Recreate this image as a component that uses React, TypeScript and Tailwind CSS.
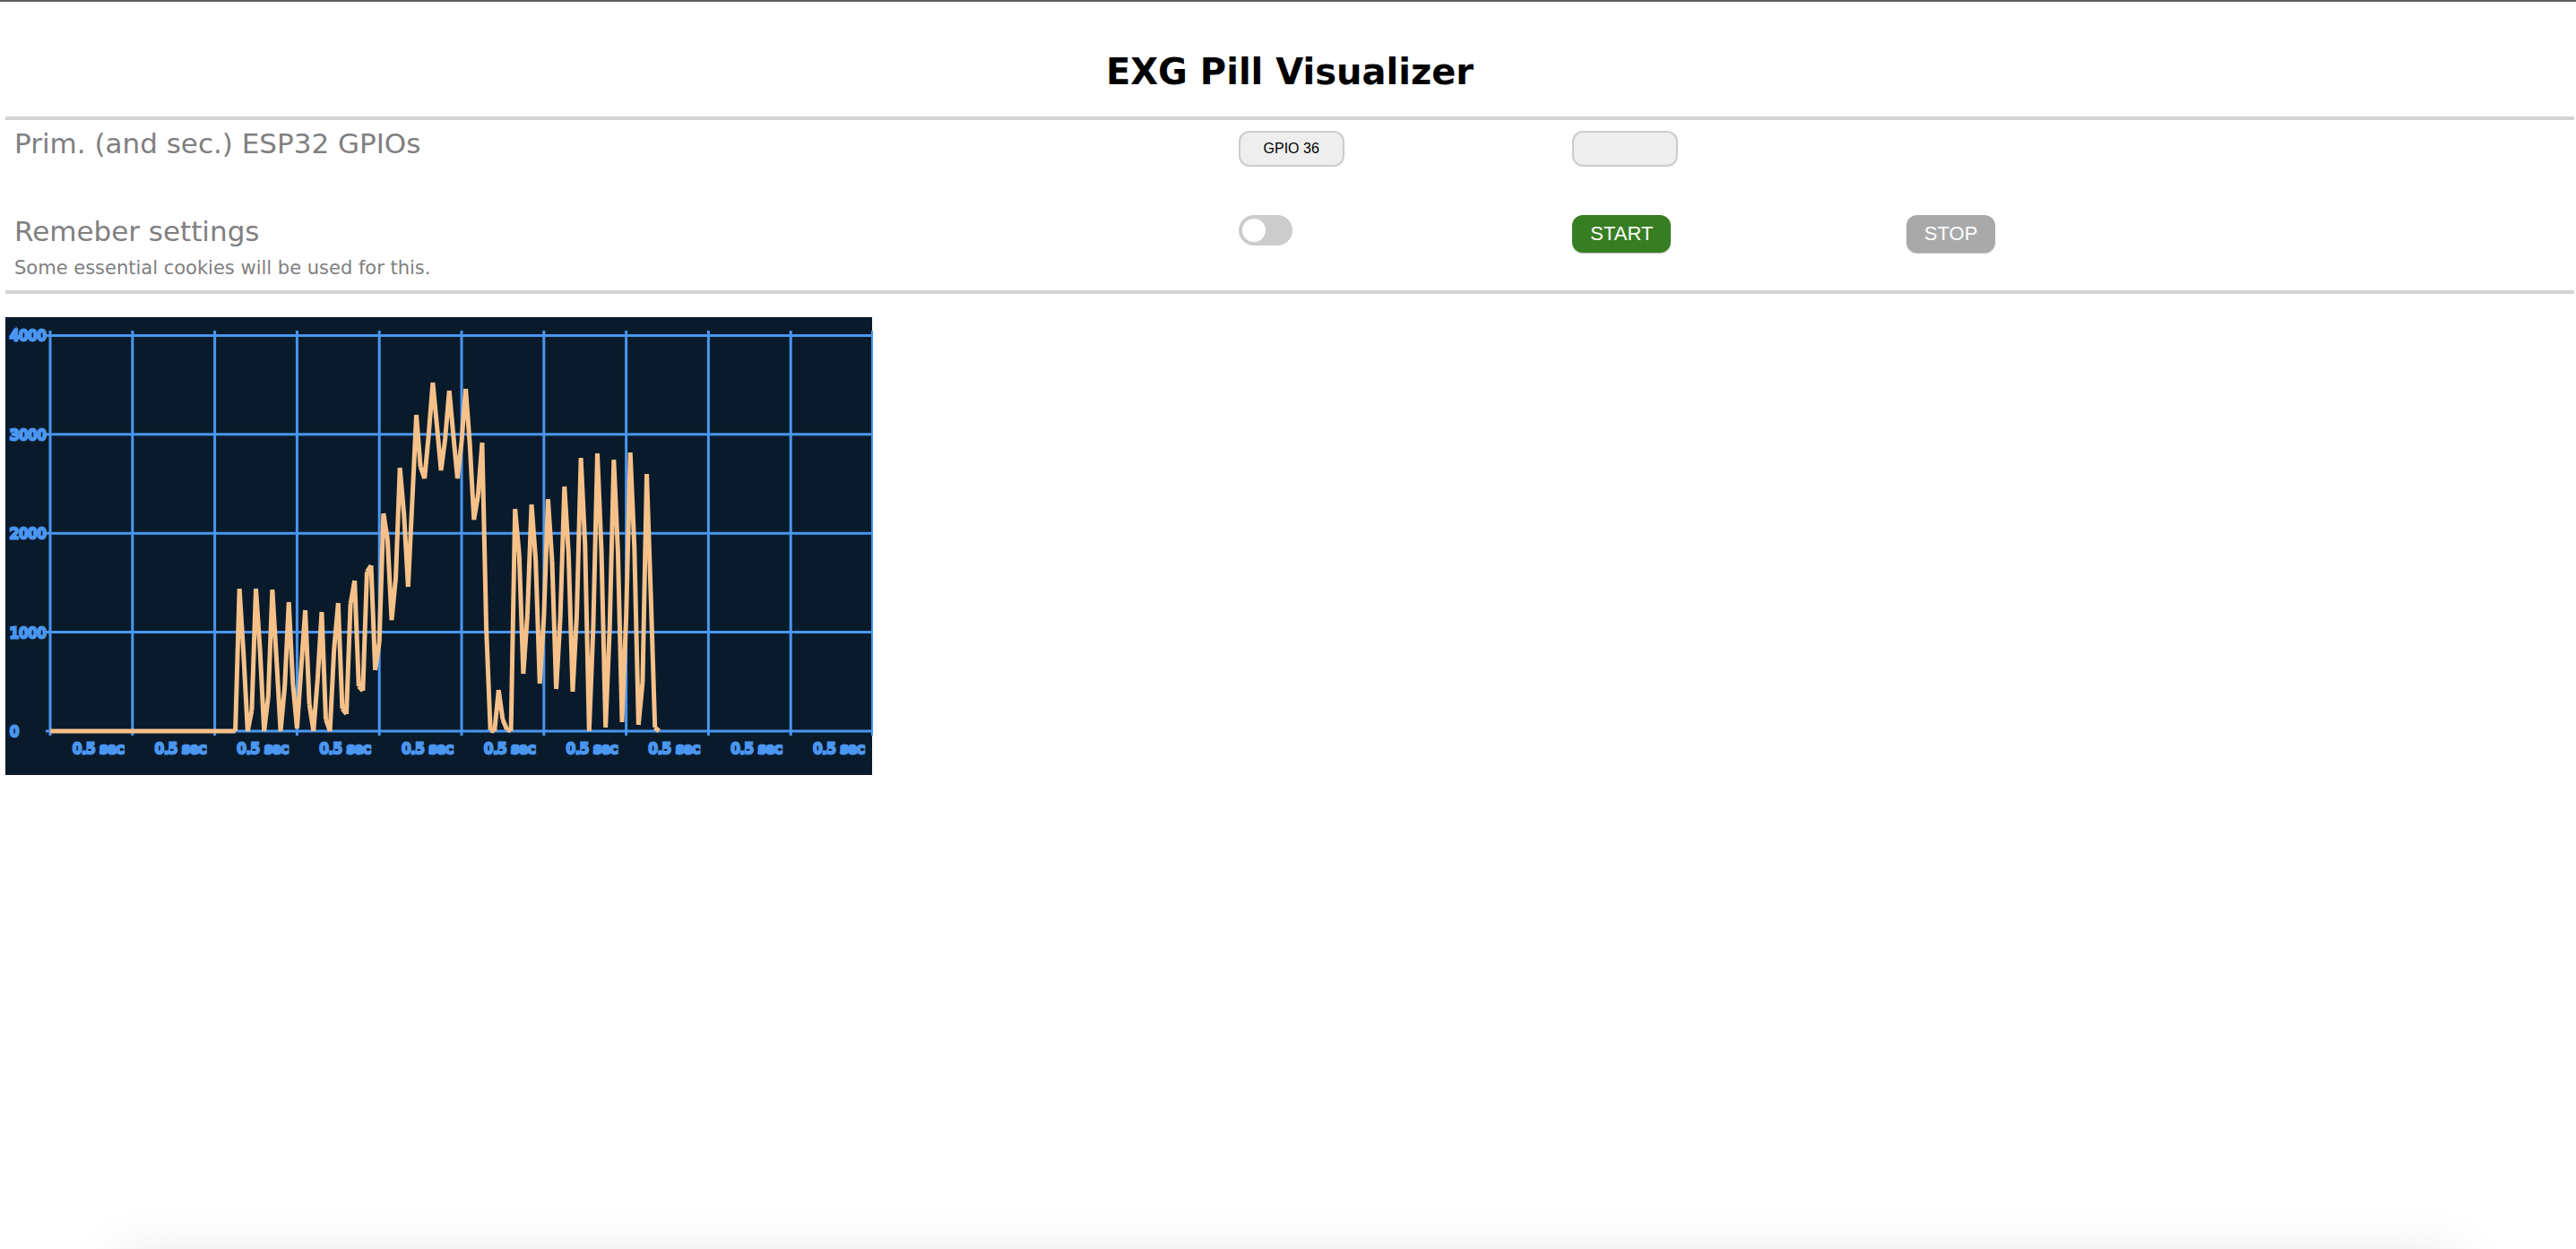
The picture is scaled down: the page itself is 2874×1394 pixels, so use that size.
import React, { useState } from "react";

const LINE = "#4a96f0";
const TRACE = "#f6c189";

const CHART = { left: 6, top: 354, width: 967, height: 511 };
const ORIGIN_X = 56;
const ZERO_Y = 816;
const COLUMN_STEP = 91.8;
const ROW_STEP = 110.4;
const SAMPLE_STEP = COLUMN_STEP / 20;
const FLAT_SAMPLES = 46;

// Vertical position of every sample that follows the flat lead-in.
const SAMPLES = [
  657, 730, 816, 793, 657, 725, 816, 778, 658, 735, 816, 767, 672, 763, 813, 746, 681, 786, 816, 758,
  683, 803, 816, 725, 673, 791, 797, 674, 648, 766, 771, 638, 631, 748, 717, 573, 602, 692, 645, 522,
  574, 655, 560, 463, 521, 534, 485, 427, 475, 525, 490, 436, 486, 534, 493, 434, 496, 580, 553, 494,
  701, 815, 816, 770, 803, 814, 816, 568, 619, 752, 686, 563, 624, 763, 689, 557, 626, 769, 689, 543,
  618, 772, 686, 511, 606, 816, 700, 506, 616, 812, 700, 513, 616, 806, 689, 505, 611, 809, 761, 529,
  665, 812, 816,
];

const POINTS = [...Array<number>(FLAT_SAMPLES).fill(ZERO_Y), ...SAMPLES].map((y, i) => [
  ORIGIN_X + i * SAMPLE_STEP,
  y,
]);

// Each pair of samples is its own segment, so joints stay flat.
const TRACE_PATH = POINTS.slice(1)
  .map(([x, y], i) => `M${POINTS[i][0]} ${POINTS[i][1]}L${x} ${y}`)
  .join("");

const ROWS = [0, 1000, 2000, 3000, 4000];
const COLUMNS = Array.from({ length: 10 }, (_, i) => i);

function Chart() {
  return (
    <svg
      role="img"
      aria-label="Signal over time"
      width={CHART.width}
      height={CHART.height}
      viewBox={`${CHART.left} ${CHART.top} ${CHART.width} ${CHART.height}`}
      className="block overflow-visible"
    >
      <rect x={CHART.left} y={CHART.top} width={CHART.width} height={CHART.height} fill="#091b2b" />
      <g stroke={LINE} strokeWidth={3}>
        {ROWS.map((value, i) => (
          <line key={value} x1={51} x2={973} y1={ZERO_Y - i * ROW_STEP} y2={ZERO_Y - i * ROW_STEP} />
        ))}
        {COLUMNS.map((i) => (
          <line key={i} x1={ORIGIN_X + i * COLUMN_STEP} x2={ORIGIN_X + i * COLUMN_STEP} y1={369} y2={821} />
        ))}
      </g>
      <line x1={973} x2={973} y1={369} y2={821} stroke={LINE} strokeWidth={2} />
      <g
        fill={LINE}
        stroke={LINE}
        strokeWidth={3}
        fontSize={16}
        className="[font-family:Verdana,'DejaVu_Sans',sans-serif]"
      >
        {ROWS.map((value, i) => (
          <text key={value} x={11} y={ZERO_Y - i * ROW_STEP + 6}>
            {value}
          </text>
        ))}
        {COLUMNS.map((i) => (
          <text key={i} x={81 + i * COLUMN_STEP} y={841}>
            0.5 sec
          </text>
        ))}
      </g>
      <path d={TRACE_PATH} fill="none" stroke={TRACE} strokeWidth={5} />
    </svg>
  );
}

const selectClass =
  "h-10 w-[118px] appearance-none rounded-xl border-2 border-[#cccccc] bg-[#eeeeee] text-center text-base text-black [font-family:Arial,'Liberation_Sans',sans-serif] [text-align-last:center]";
const buttonClass =
  "rounded-xl px-5 py-2 text-[22px] leading-[26px] text-white shadow-[0_1px_1px_#bbbbbb] [font-family:Arial,'Liberation_Sans',sans-serif]";

export default function App() {
  const [remember, setRemember] = useState(false);

  return (
    <div className="flex min-h-screen flex-col overflow-hidden border-t-2 border-[#5f5b62] bg-white text-[#808080] [font-family:Verdana,'DejaVu_Sans',sans-serif]">
      <main className="pr-0.5 pl-1.5">
        <h1 className="pt-[54px] pb-[26px] text-center text-[40px] leading-[48px] font-bold text-black">
          EXG Pill Visualizer
        </h1>
        <section className="border-y-4 border-[#d3d3d3]">
          <div className="grid h-[94px] grid-cols-[48fr_13fr_13fr_26fr] items-start">
            <label htmlFor="primary" className="pt-2 pl-2.5 text-[31px] leading-9">
              Prim. (and sec.) ESP32 GPIOs
            </label>
            <div className="pt-3">
              <select id="primary" className={selectClass} defaultValue="36">
                <option value="36">GPIO 36</option>
                <option value="39">GPIO 39</option>
              </select>
            </div>
            <div className="pt-3">
              <select aria-label="Secondary GPIO" className={selectClass} defaultValue="">
                <option value=""></option>
                <option value="39">GPIO 39</option>
              </select>
            </div>
          </div>
          <div className="grid h-24 grid-cols-[48fr_13fr_13fr_26fr] items-start">
            <div className="pt-3 pl-2.5">
              <label htmlFor="remember" className="block text-[31px] leading-9">
                Remeber settings
              </label>
              <p className="text-[21px] leading-[46px]">Some essential cookies will be used for this.</p>
            </div>
            <div className="pt-3">
              <input
                id="remember"
                type="checkbox"
                role="switch"
                checked={remember}
                onChange={(e) => setRemember(e.target.checked)}
                className="block h-[34px] w-[60px] appearance-none rounded-full bg-[#cccccc] p-1 before:block before:size-[26px] before:rounded-full before:bg-white before:content-[''] checked:bg-[#377e22] checked:before:ml-auto"
              />
            </div>
            <div className="pt-3">
              <button type="button" className={`${buttonClass} bg-[#377e22]`}>
                START
              </button>
            </div>
            <div className="pt-3">
              <button type="button" className={`${buttonClass} bg-[#a9a9a9]`}>
                STOP
              </button>
            </div>
          </div>
        </section>
        <div className="pt-[26px]">
          <Chart />
        </div>
      </main>
      <div className="mx-32 mt-auto -mb-24 h-24 shadow-[0_10px_64px_rgba(0,0,0,0.11)]" />
    </div>
  );
}
